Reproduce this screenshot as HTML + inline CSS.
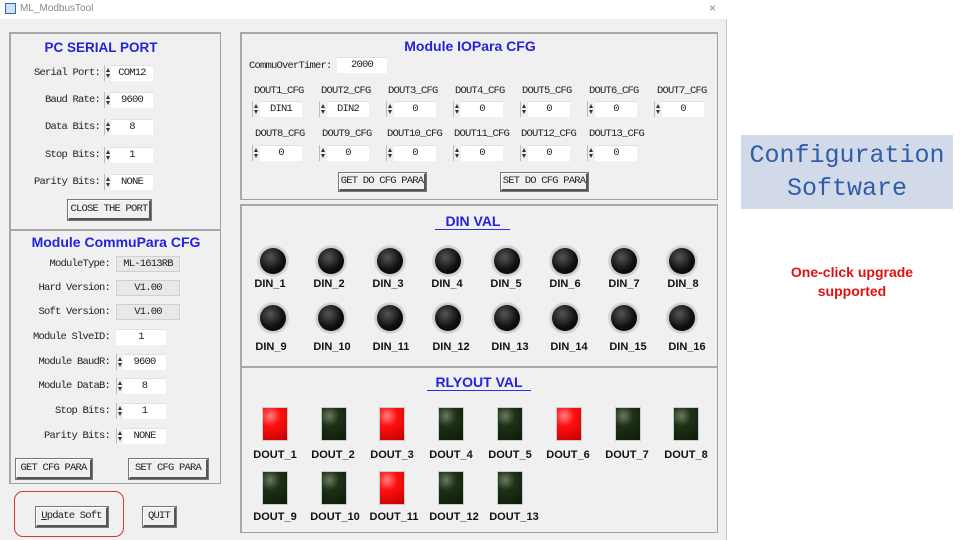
<!DOCTYPE html>
<html><head><meta charset="utf-8"><style>
*{box-sizing:border-box;margin:0;padding:0}
body{width:960px;height:540px;background:#fff;position:relative;overflow:hidden;font-family:"Liberation Mono",monospace}
.a{position:absolute}
.win{left:0;top:0;width:727px;height:540px;background:#f0f0f0;border-right:1px solid #c8c8c8}
.tb{left:0;top:0;width:727px;height:19px;background:#fff}
.grp{border:1px solid #a0a0a0;border-top:2px solid #a8a8a8;border-left:2px solid #a8a8a8;background:#f0f0f0}
.t{font-family:"Liberation Sans",sans-serif;font-weight:bold;color:#2323d8;text-align:center;white-space:nowrap}
.lb,.in,.ro,.bt{font-size:10.5px;letter-spacing:-0.8px}
.lb{color:#222;white-space:nowrap;line-height:12px}
.r{text-align:right}
.in{background:#fff;border-top:1px solid #e0e0e0;text-align:center;line-height:15px;height:16px;color:#222;white-space:nowrap}
.ro{background:#e8e8e8;border:1px solid #d0d0d0;text-align:center;line-height:14px;height:16px;color:#222;white-space:nowrap}
.sp{width:6px;height:16px;border-left:1px solid #bbb;background:#f0f0f0}
.sp:before{content:"";position:absolute;left:1px;top:3px;border-left:2px solid transparent;border-right:2px solid transparent;border-bottom:4px solid #333}
.sp:after{content:"";position:absolute;left:1px;bottom:3px;border-left:2px solid transparent;border-right:2px solid transparent;border-top:4px solid #333}
.bt{background:#f0f0f0;border:1px solid #fff;border-right:2px solid #555;border-bottom:2px solid #555;outline:1px solid #777;text-align:center;line-height:16px;color:#222;white-space:nowrap}
.led{width:32px;height:32px;border-radius:50%;background:radial-gradient(circle,#ccc 60%,#e2e2e2 75%,#f0f0f0 100%)}
.led i{position:absolute;left:3px;top:3px;width:26px;height:26px;border-radius:50%;background:radial-gradient(circle at 40% 35%,#555 0,#111 55%,#000 100%)}
.dl{font-family:"Liberation Sans",sans-serif;font-weight:bold;font-size:11px;color:#111;text-align:center;width:60px}
.rl{width:26px;height:34px;background:#ccc;padding:1px}
.rl i{display:block;width:24px;height:32px}
.on i{background:radial-gradient(circle at 30% 25%,#ff8080 0,#ff1010 35%,#c00000 100%)}
.of i{background:radial-gradient(circle at 30% 25%,#6a7a60 0,#1e3018 35%,#0d1a08 100%)}
</style></head><body>
<div class="a win"></div>
<div class="a tb"></div>
<div class="a" style="left:5px;top:3px;width:11px;height:11px;border:1px solid #2a6bb8;background:#cfe0f5"></div>
<div class="a" style="left:20px;top:3px;font-family:'Liberation Sans',sans-serif;font-size:10px;color:#888">ML_ModbusTool</div>
<div class="a" style="left:709px;top:1px;font-family:'Liberation Sans',sans-serif;font-size:12px;color:#888">×</div>

<div class="a grp" style="left:9px;top:32px;width:212px;height:198px"></div>
<div class="a grp" style="left:9px;top:229px;width:212px;height:255px"></div>
<div class="a t" style="left:10px;top:40px;width:182px;font-size:13.5px">PC SERIAL PORT</div>
<div class="a lb r" style="left:10px;top:67px;width:90px">Serial Port:</div><div class="a sp" style="left:104px;top:65px"></div><div class="a in" style="left:111px;top:65px;width:42px">COM12</div>
<div class="a lb r" style="left:10px;top:94px;width:90px">Baud Rate:</div><div class="a sp" style="left:104px;top:92px"></div><div class="a in" style="left:111px;top:92px;width:42px">9600</div>
<div class="a lb r" style="left:10px;top:121px;width:90px">Data Bits:</div><div class="a sp" style="left:104px;top:119px"></div><div class="a in" style="left:111px;top:119px;width:42px">8</div>
<div class="a lb r" style="left:10px;top:149px;width:90px">Stop Bits:</div><div class="a sp" style="left:104px;top:147px"></div><div class="a in" style="left:111px;top:147px;width:42px">1</div>
<div class="a lb r" style="left:10px;top:176px;width:90px">Parity Bits:</div><div class="a sp" style="left:104px;top:174px"></div><div class="a in" style="left:111px;top:174px;width:42px">NONE</div>
<div class="a bt" style="left:68px;top:200px;width:83px;height:20px;line-height:17px">CLOSE THE PORT</div>

<div class="a t" style="left:12px;top:234px;width:208px;font-size:14px">Module CommuPara CFG</div>
<div class="a lb r" style="left:10px;top:258px;width:100px">ModuleType:</div><div class="a ro" style="left:116px;top:256px;width:64px">ML-1613RB</div>
<div class="a lb r" style="left:10px;top:282px;width:100px">Hard Version:</div><div class="a ro" style="left:116px;top:280px;width:64px">V1.00</div>
<div class="a lb r" style="left:10px;top:306px;width:100px">Soft Version:</div><div class="a ro" style="left:116px;top:304px;width:64px">V1.00</div>
<div class="a lb r" style="left:10px;top:331px;width:100px">Module SlveID:</div><div class="a in" style="left:116px;top:329px;width:50px">1</div>
<div class="a lb r" style="left:10px;top:356px;width:100px">Module BaudR:</div><div class="a sp" style="left:116px;top:354px"></div><div class="a in" style="left:123px;top:354px;width:43px">9600</div>
<div class="a lb r" style="left:10px;top:380px;width:100px">Module DataB:</div><div class="a sp" style="left:116px;top:378px"></div><div class="a in" style="left:123px;top:378px;width:43px">8</div>
<div class="a lb r" style="left:10px;top:405px;width:100px">Stop Bits:</div><div class="a sp" style="left:116px;top:403px"></div><div class="a in" style="left:123px;top:403px;width:43px">1</div>
<div class="a lb r" style="left:10px;top:430px;width:100px">Parity Bits:</div><div class="a sp" style="left:116px;top:428px"></div><div class="a in" style="left:123px;top:428px;width:43px">NONE</div>
<div class="a bt" style="left:16px;top:459px;width:76px;height:20px;line-height:17px">GET CFG PARA</div>
<div class="a bt" style="left:129px;top:459px;width:79px;height:20px;line-height:17px">SET CFG PARA</div>
<div class="a" style="left:14px;top:491px;width:110px;height:46px;border:1.5px solid #d03838;border-radius:9px"></div>
<div class="a bt" style="left:36px;top:507px;width:72px;height:20px;line-height:17px"><u>U</u>pdate Soft</div>
<div class="a bt" style="left:143px;top:507px;width:33px;height:20px;line-height:17px">QUIT</div>

<div class="a grp" style="left:240px;top:32px;width:478px;height:168px"></div>
<div class="a t" style="left:240px;top:38px;width:460px;font-size:14px">Module IOPara CFG</div>
<div class="a lb" style="left:249px;top:60px">CommuOverTimer:</div>
<div class="a in" style="left:337px;top:57px;width:50px">2000</div>

<div class="a lb" style="left:254px;top:85px">DOUT1_CFG</div><div class="a sp" style="left:252px;top:101px"></div><div class="a in" style="left:260px;top:101px;width:42px">DIN1</div>
<div class="a lb" style="left:321px;top:85px">DOUT2_CFG</div><div class="a sp" style="left:319px;top:101px"></div><div class="a in" style="left:327px;top:101px;width:42px">DIN2</div>
<div class="a lb" style="left:388px;top:85px">DOUT3_CFG</div><div class="a sp" style="left:386px;top:101px"></div><div class="a in" style="left:394px;top:101px;width:42px">0</div>
<div class="a lb" style="left:455px;top:85px">DOUT4_CFG</div><div class="a sp" style="left:453px;top:101px"></div><div class="a in" style="left:461px;top:101px;width:42px">0</div>
<div class="a lb" style="left:522px;top:85px">DOUT5_CFG</div><div class="a sp" style="left:520px;top:101px"></div><div class="a in" style="left:528px;top:101px;width:42px">0</div>
<div class="a lb" style="left:589px;top:85px">DOUT6_CFG</div><div class="a sp" style="left:587px;top:101px"></div><div class="a in" style="left:595px;top:101px;width:42px">0</div>
<div class="a lb" style="left:657px;top:85px">DOUT7_CFG</div><div class="a sp" style="left:654px;top:101px"></div><div class="a in" style="left:662px;top:101px;width:42px">0</div>

<div class="a lb" style="left:255px;top:128px">DOUT8_CFG</div><div class="a sp" style="left:252px;top:145px"></div><div class="a in" style="left:260px;top:145px;width:42px">0</div>
<div class="a lb" style="left:322px;top:128px">DOUT9_CFG</div><div class="a sp" style="left:319px;top:145px"></div><div class="a in" style="left:327px;top:145px;width:42px">0</div>
<div class="a lb" style="left:387px;top:128px">DOUT10_CFG</div><div class="a sp" style="left:386px;top:145px"></div><div class="a in" style="left:394px;top:145px;width:42px">0</div>
<div class="a lb" style="left:454px;top:128px">DOUT11_CFG</div><div class="a sp" style="left:453px;top:145px"></div><div class="a in" style="left:461px;top:145px;width:42px">0</div>
<div class="a lb" style="left:521px;top:128px">DOUT12_CFG</div><div class="a sp" style="left:520px;top:145px"></div><div class="a in" style="left:528px;top:145px;width:42px">0</div>
<div class="a lb" style="left:589px;top:128px">DOUT13_CFG</div><div class="a sp" style="left:587px;top:145px"></div><div class="a in" style="left:595px;top:145px;width:42px">0</div>
<div class="a bt" style="left:339px;top:173px;width:87px;height:18px;line-height:15px">GET DO CFG PARA</div>
<div class="a bt" style="left:501px;top:173px;width:87px;height:18px;line-height:15px">SET DO CFG PARA</div>

<div class="a grp" style="left:240px;top:204px;width:478px;height:163px"></div>
<div class="a t" style="left:240px;top:213px;width:466px;font-size:14px">DIN VAL</div>
<div class="a" style="left:435px;top:229px;width:75px;height:1px;background:#3030e0"></div>
<div class="a grp" style="left:240px;top:366px;width:478px;height:167px"></div>
<div class="a t" style="left:240px;top:374px;width:478px;font-size:14px">RLYOUT VAL</div>
<div class="a" style="left:427px;top:390px;width:104px;height:1px;background:#3030e0"></div>

<div class="a led" style="left:257px;top:245px"><i></i></div><div class="a dl" style="left:240px;top:278px">DIN_1</div>
<div class="a led" style="left:315px;top:245px"><i></i></div><div class="a dl" style="left:299px;top:278px">DIN_2</div>
<div class="a led" style="left:374px;top:245px"><i></i></div><div class="a dl" style="left:358px;top:278px">DIN_3</div>
<div class="a led" style="left:432px;top:245px"><i></i></div><div class="a dl" style="left:417px;top:278px">DIN_4</div>
<div class="a led" style="left:491px;top:245px"><i></i></div><div class="a dl" style="left:476px;top:278px">DIN_5</div>
<div class="a led" style="left:549px;top:245px"><i></i></div><div class="a dl" style="left:535px;top:278px">DIN_6</div>
<div class="a led" style="left:608px;top:245px"><i></i></div><div class="a dl" style="left:594px;top:278px">DIN_7</div>
<div class="a led" style="left:666px;top:245px"><i></i></div><div class="a dl" style="left:653px;top:278px">DIN_8</div>
<div class="a led" style="left:257px;top:302px"><i></i></div><div class="a dl" style="left:241px;top:341px">DIN_9</div>
<div class="a led" style="left:315px;top:302px"><i></i></div><div class="a dl" style="left:302px;top:341px">DIN_10</div>
<div class="a led" style="left:374px;top:302px"><i></i></div><div class="a dl" style="left:361px;top:341px">DIN_11</div>
<div class="a led" style="left:432px;top:302px"><i></i></div><div class="a dl" style="left:421px;top:341px">DIN_12</div>
<div class="a led" style="left:491px;top:302px"><i></i></div><div class="a dl" style="left:480px;top:341px">DIN_13</div>
<div class="a led" style="left:549px;top:302px"><i></i></div><div class="a dl" style="left:539px;top:341px">DIN_14</div>
<div class="a led" style="left:608px;top:302px"><i></i></div><div class="a dl" style="left:598px;top:341px">DIN_15</div>
<div class="a led" style="left:666px;top:302px"><i></i></div><div class="a dl" style="left:657px;top:341px">DIN_16</div>

<div class="a rl on" style="left:262px;top:407px"><i></i></div><div class="a dl" style="left:245px;top:449px">DOUT_1</div>
<div class="a rl of" style="left:321px;top:407px"><i></i></div><div class="a dl" style="left:303px;top:449px">DOUT_2</div>
<div class="a rl on" style="left:379px;top:407px"><i></i></div><div class="a dl" style="left:362px;top:449px">DOUT_3</div>
<div class="a rl of" style="left:438px;top:407px"><i></i></div><div class="a dl" style="left:421px;top:449px">DOUT_4</div>
<div class="a rl of" style="left:497px;top:407px"><i></i></div><div class="a dl" style="left:480px;top:449px">DOUT_5</div>
<div class="a rl on" style="left:556px;top:407px"><i></i></div><div class="a dl" style="left:538px;top:449px">DOUT_6</div>
<div class="a rl of" style="left:615px;top:407px"><i></i></div><div class="a dl" style="left:597px;top:449px">DOUT_7</div>
<div class="a rl of" style="left:673px;top:407px"><i></i></div><div class="a dl" style="left:656px;top:449px">DOUT_8</div>
<div class="a rl of" style="left:262px;top:471px"><i></i></div><div class="a dl" style="left:245px;top:511px">DOUT_9</div>
<div class="a rl of" style="left:321px;top:471px"><i></i></div><div class="a dl" style="left:305px;top:511px">DOUT_10</div>
<div class="a rl on" style="left:379px;top:471px"><i></i></div><div class="a dl" style="left:364px;top:511px">DOUT_11</div>
<div class="a rl of" style="left:438px;top:471px"><i></i></div><div class="a dl" style="left:424px;top:511px">DOUT_12</div>
<div class="a rl of" style="left:497px;top:471px"><i></i></div><div class="a dl" style="left:484px;top:511px">DOUT_13</div>

<div class="a" style="left:741px;top:135px;width:212px;height:74px;background:#d2daea"></div>
<div class="a" style="left:741px;top:139px;width:212px;text-align:center;font-family:'Liberation Mono',monospace;font-size:25px;line-height:33px;color:#2f5da6">Configuration<br>Software</div>
<div class="a" style="left:752px;top:263px;width:200px;text-align:center;font-family:'Liberation Sans',sans-serif;font-weight:bold;font-size:14px;line-height:19px;color:#e01010">One-click upgrade<br>supported</div>
</body></html>
